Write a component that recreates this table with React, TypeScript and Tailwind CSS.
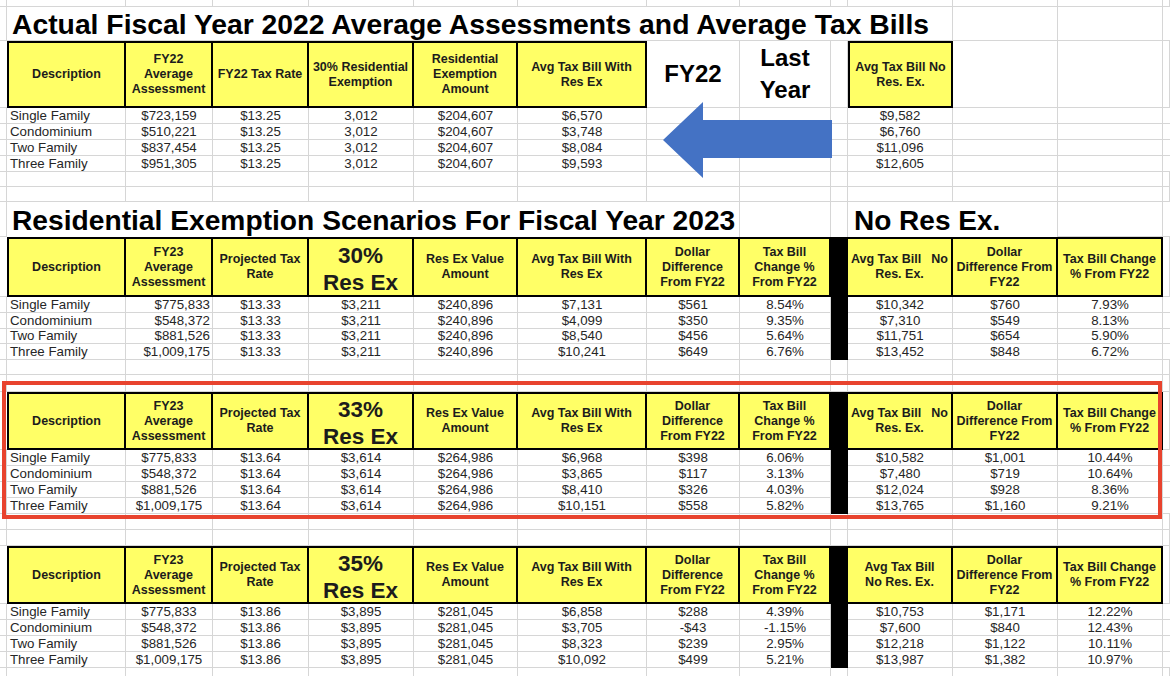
import React from "react";

// spreadsheet column widths (px), last one fills the rest
const COLS = [
  "w-[7px]",
  "w-[119px]",
  "w-[87px]",
  "w-[96px]",
  "w-[105px]",
  "w-[104px]",
  "w-[129px]",
  "w-[93px]",
  "w-[91px]",
  "w-[17px]",
  "w-[105px]",
  "w-[105px]",
  "w-[105px]",
  "flex-1",
];

const GRID = "border-[#d6d6d6]";

type HCell = { k: "y" | "b" | "w"; c?: React.ReactNode; first?: boolean };

function BlankRow({ h }: { h: string }) {
  return (
    <div className={`flex ${h}`}>
      {COLS.map((w, i) => (
        <div key={i} className={`${w} shrink-0 border-r border-b ${GRID}`} />
      ))}
    </div>
  );
}

function DataRow({
  cells,
  black,
  right,
  h = "h-[16px]",
}: {
  cells: string[];
  black?: boolean;
  right?: number;
  h?: string;
}) {
  return (
    <div className={`flex ${h}`}>
      <div className={`${COLS[0]} shrink-0 border-r border-b ${GRID}`} />
      {cells.map((v, j) => {
        const i = j + 1;
        if (black && i === 9) {
          return <div key={i} className={`${COLS[i]} shrink-0 bg-black`} />;
        }
        const align =
          i === 1 ? "justify-start pl-[3px]" : i === right ? "justify-end pr-[2px]" : "justify-center";
        return (
          <div
            key={i}
            className={`${COLS[i]} shrink-0 border-r border-b ${GRID} flex items-center ${align} text-[13.3px] leading-none text-[#262626] whitespace-nowrap`}
          >
            {v}
          </div>
        );
      })}
      <div className={`${COLS[13]} shrink-0 border-b ${GRID}`} />
    </div>
  );
}

function HeaderRow({ h, cells }: { h: string; cells: HCell[] }) {
  return (
    <div className={`flex ${h}`}>
      {cells.map((cell, i) => {
        const w = COLS[i];
        if (cell.k === "y") {
          return (
            <div
              key={i}
              className={`${w} shrink-0 bg-[#ffff66] border-y-2 border-r-2 border-black ${cell.first ? "border-l-2" : ""} flex items-center justify-center text-center font-bold text-[12.5px] leading-[15px] text-[#1c1c1c] whitespace-nowrap`}
            >
              {cell.c}
            </div>
          );
        }
        if (cell.k === "b") {
          return <div key={i} className={`${w} shrink-0 bg-black border-y-2 border-black`} />;
        }
        return (
          <div
            key={i}
            className={`${w} shrink-0 border-b ${i === 0 ? "" : "border-r"} ${GRID} flex items-center justify-center text-center`}
          >
            {cell.c}
          </div>
        );
      })}
    </div>
  );
}

function scenarioHeader(pct: string, splitNo: boolean): HCell[] {
  return [
    { k: "w" },
    { k: "y", first: true, c: "Description" },
    { k: "y", c: <>FY23<br />Average<br />Assessment</> },
    { k: "y", c: <>Projected Tax<br />Rate</> },
    {
      k: "y",
      c: (
        <div className="text-[22.5px] leading-[27px] pt-[4px]">
          {pct}
          <br />
          Res Ex
        </div>
      ),
    },
    { k: "y", c: <>Res Ex Value<br />Amount</> },
    { k: "y", c: <>Avg Tax Bill With<br />Res Ex</> },
    { k: "y", c: <>Dollar<br />Difference<br />From FY22</> },
    { k: "y", c: <>Tax Bill<br />Change %<br />From FY22</> },
    { k: "b" },
    {
      k: "y",
      c: splitNo ? (
        <div className="w-full px-[3px]">
          <div className="flex justify-between">
            <span>Avg Tax Bill</span>
            <span>No</span>
          </div>
          <div>Res. Ex.</div>
        </div>
      ) : (
        <>Avg Tax Bill<br />No Res. Ex.</>
      ),
    },
    { k: "y", c: <>Dollar<br />Difference From<br />FY22</> },
    { k: "y", c: <>Tax Bill Change<br />% From FY22</> },
    { k: "w" },
  ];
}

const fy22: string[][] = [
  ["Single Family", "$723,159", "$13.25", "3,012", "$204,607", "$6,570", "", "", "", "$9,582", "", ""],
  ["Condominium", "$510,221", "$13.25", "3,012", "$204,607", "$3,748", "", "", "", "$6,760", "", ""],
  ["Two Family", "$837,454", "$13.25", "3,012", "$204,607", "$8,084", "", "", "", "$11,096", "", ""],
  ["Three Family", "$951,305", "$13.25", "3,012", "$204,607", "$9,593", "", "", "", "$12,605", "", ""],
];

const s30: string[][] = [
  ["Single Family", "$775,833", "$13.33", "$3,211", "$240,896", "$7,131", "$561", "8.54%", "", "$10,342", "$760", "7.93%"],
  ["Condominium", "$548,372", "$13.33", "$3,211", "$240,896", "$4,099", "$350", "9.35%", "", "$7,310", "$549", "8.13%"],
  ["Two Family", "$881,526", "$13.33", "$3,211", "$240,896", "$8,540", "$456", "5.64%", "", "$11,751", "$654", "5.90%"],
  ["Three Family", "$1,009,175", "$13.33", "$3,211", "$240,896", "$10,241", "$649", "6.76%", "", "$13,452", "$848", "6.72%"],
];

const s33: string[][] = [
  ["Single Family", "$775,833", "$13.64", "$3,614", "$264,986", "$6,968", "$398", "6.06%", "", "$10,582", "$1,001", "10.44%"],
  ["Condominium", "$548,372", "$13.64", "$3,614", "$264,986", "$3,865", "$117", "3.13%", "", "$7,480", "$719", "10.64%"],
  ["Two Family", "$881,526", "$13.64", "$3,614", "$264,986", "$8,410", "$326", "4.03%", "", "$12,024", "$928", "8.36%"],
  ["Three Family", "$1,009,175", "$13.64", "$3,614", "$264,986", "$10,151", "$558", "5.82%", "", "$13,765", "$1,160", "9.21%"],
];

const s35: string[][] = [
  ["Single Family", "$775,833", "$13.86", "$3,895", "$281,045", "$6,858", "$288", "4.39%", "", "$10,753", "$1,171", "12.22%"],
  ["Condominium", "$548,372", "$13.86", "$3,895", "$281,045", "$3,705", "-$43", "-1.15%", "", "$7,600", "$840", "12.43%"],
  ["Two Family", "$881,526", "$13.86", "$3,895", "$281,045", "$8,323", "$239", "2.95%", "", "$12,218", "$1,122", "10.11%"],
  ["Three Family", "$1,009,175", "$13.86", "$3,895", "$281,045", "$10,092", "$499", "5.21%", "", "$13,987", "$1,382", "10.97%"],
];

const fy22Header: HCell[] = [
  { k: "w" },
  { k: "y", first: true, c: "Description" },
  { k: "y", c: <>FY22<br />Average<br />Assessment</> },
  { k: "y", c: "FY22 Tax Rate" },
  { k: "y", c: <>30% Residential<br />Exemption</> },
  { k: "y", c: <>Residential<br />Exemption<br />Amount</> },
  { k: "y", c: <>Avg Tax Bill With<br />Res Ex</> },
  { k: "w", c: <span className="text-[24px] font-bold text-black">FY22</span> },
  {
    k: "w",
    c: (
      <span className="text-[24px] leading-[32px] font-bold text-black">
        Last
        <br />
        Year
      </span>
    ),
  },
  { k: "w" },
  { k: "y", first: true, c: <>Avg Tax Bill No<br />Res. Ex.</> },
  { k: "w" },
  { k: "w" },
  { k: "w" },
];

const App = () => {
  return (
    <div className="relative w-[1170px] h-[676px] overflow-hidden bg-white font-['Liberation_Sans',Arial,sans-serif]">
      <BlankRow h="h-[7px]" />

      {/* FY22 title */}
      <div className="flex h-[34px]">
        <div className={`${COLS[0]} shrink-0 border-r border-b ${GRID}`} />
        <div className={`w-[946px] shrink-0 border-r border-b ${GRID} flex items-center pl-[5px] pt-[1px] text-[28.3px] font-bold text-black whitespace-nowrap`}>
          Actual Fiscal Year 2022 Average Assessments and Average Tax Bills
        </div>
        <div className={`${COLS[11]} shrink-0 border-r border-b ${GRID}`} />
        <div className={`${COLS[12]} shrink-0 border-r border-b ${GRID}`} />
        <div className={`${COLS[13]} shrink-0 border-b ${GRID}`} />
      </div>

      <HeaderRow h="h-[67px]" cells={fy22Header} />
      {fy22.map((r) => (
        <DataRow key={r[0]} cells={r} />
      ))}
      <BlankRow h="h-[15px]" />
      <BlankRow h="h-[15px]" />

      {/* FY23 title */}
      <div className="flex h-[35px]">
        <div className={`${COLS[0]} shrink-0 border-r border-b ${GRID}`} />
        <div className={`w-[733px] shrink-0 border-r ${GRID} flex items-center pl-[5px] pt-[2px] text-[28.2px] font-bold text-black whitespace-nowrap`}>
          Residential Exemption Scenarios For Fiscal Year 2023
        </div>
        <div className={`${COLS[8]} shrink-0 border-r ${GRID}`} />
        <div className={`${COLS[9]} shrink-0 border-r ${GRID}`} />
        <div className={`w-[210px] shrink-0 border-r ${GRID} flex items-center pl-[6px] pt-[2px] text-[28px] font-bold text-black whitespace-nowrap`}>
          No Res Ex.
        </div>
        <div className={`${COLS[12]} shrink-0 border-r border-b ${GRID}`} />
        <div className={`${COLS[13]} shrink-0 border-b ${GRID}`} />
      </div>

      <HeaderRow h="h-[60px]" cells={scenarioHeader("30%", true)} />
      {s30.map((r, i) => (
        <DataRow key={r[0]} cells={r} black right={2} h={i === 2 ? "h-[15px]" : "h-[16px]"} />
      ))}
      <BlankRow h="h-[15px]" />
      <BlankRow h="h-[17px]" />

      <HeaderRow h="h-[58px]" cells={scenarioHeader("33%", true)} />
      {s33.map((r) => (
        <DataRow key={r[0]} cells={r} black />
      ))}
      <BlankRow h="h-[16px]" />
      <BlankRow h="h-[16px]" />

      <HeaderRow h="h-[58px]" cells={scenarioHeader("35%", false)} />
      {s35.map((r) => (
        <DataRow key={r[0]} cells={r} black />
      ))}
      <BlankRow h="h-[16px]" />

      {/* blue arrow pointing back to last year */}
      <svg
        className="absolute left-[663px] top-[102px]"
        width="169"
        height="76"
        viewBox="0 0 169 76"
      >
        <polygon points="0,38 40,0 40,18 169,18 169,56 40,56 40,76" fill="#4472c4" />
      </svg>

      {/* red highlight around the 33% scenario */}
      <div className="absolute left-[2px] top-[381px] w-[1160px] h-[138px] border-4 border-[#e8432e]" />
    </div>
  );
};

export default App;
